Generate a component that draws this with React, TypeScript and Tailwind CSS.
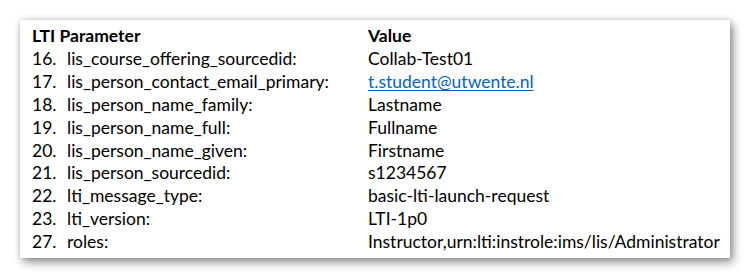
const rows: { n: string; name: string; value: string; link?: boolean }[] = [
  { n: "16.", name: "lis_course_offering_sourcedid:", value: "Collab-Test01" },
  { n: "17.", name: "lis_person_contact_email_primary:", value: "t.student@utwente.nl", link: true },
  { n: "18.", name: "lis_person_name_family:", value: "Lastname" },
  { n: "19.", name: "lis_person_name_full:", value: "Fullname" },
  { n: "20.", name: "lis_person_name_given:", value: "Firstname" },
  { n: "21.", name: "lis_person_sourcedid:", value: "s1234567" },
  { n: "22.", name: "lti_message_type:", value: "basic-lti-launch-request" },
  { n: "23.", name: "lti_version:", value: "LTI-1p0" },
  { n: "27.", name: "roles:", value: "Instructor,urn:lti:instrole:ims/lis/Administrator" },
]

export default function App() {
  return (
    <div className="w-[750px] h-[279px] bg-white pt-[20px] pl-[20px]">
      <div
        className="w-[710px] h-[238px] bg-white pl-[12px] pt-[5px] text-black shadow-[3px_4px_9px_rgba(0,0,0,0.45),0_0_5px_rgba(0,0,0,0.15)] text-[17.5px] leading-[22.9px]"
        style={{ fontFamily: "Lato, 'Open Sans', sans-serif" }}
      >
        <div className="flex font-bold">
          <div className="w-[336px]">LTI Parameter</div>
          <div>Value</div>
        </div>
        {rows.map((r) => (
          <div key={r.n} className="flex">
            <div className="w-[35px]">{r.n}</div>
            <div className="w-[301px]">{r.name}</div>
            <div>
              {r.link ? (
                <span className="text-[#0563c1] underline underline-offset-2">{r.value}</span>
              ) : (
                r.value
              )}
            </div>
          </div>
        ))}
      </div>
    </div>
  )
}
